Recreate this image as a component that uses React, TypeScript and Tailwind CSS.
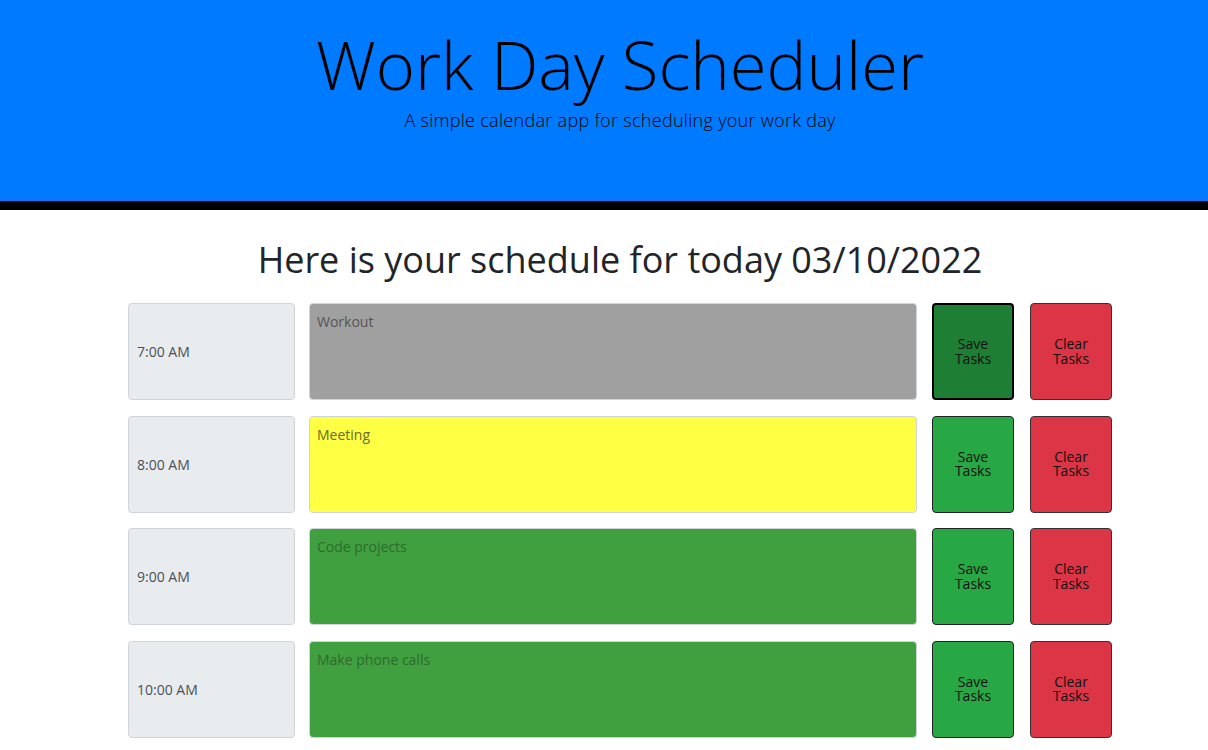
import React from "react";

const rows = [
  { time: "7:00 AM", task: "Workout", bg: "bg-[#a0a0a0]", txt: "text-[#555555]", active: true },
  { time: "8:00 AM", task: "Meeting", bg: "bg-[#ffff44]", txt: "text-[#6b6b30]", active: false },
  { time: "9:00 AM", task: "Code projects", bg: "bg-[#40a040]", txt: "text-[#2f6a2f]", active: false },
  { time: "10:00 AM", task: "Make phone calls", bg: "bg-[#40a040]", txt: "text-[#2f6a2f]", active: false },
];

export default function App() {
  return (
    <div className="min-h-screen bg-white font-['Open_Sans',sans-serif] text-[#212529]">
      <header className="h-[210px] bg-[#007bff] border-b-[9px] border-black pl-[32px] text-center">
        <h1 className="pt-[24px] text-[67px] font-light leading-[80px] text-black">Work Day Scheduler</h1>
        <p className="mt-[4px] text-[18px] font-light leading-[24px] text-black tracking-[0.3px]">
          A simple calendar app for scheduling your work day
        </p>
      </header>
      <main className="pl-[32px]">
        <h2 className="mt-[28px] text-center text-[36px] leading-[44px] font-normal">
          Here is your schedule for today 03/10/2022
        </h2>
        <div className="mx-auto mt-[21px] flex w-[984px] flex-col gap-[15.67px]">
          {rows.map((r) => (
            <div key={r.time} className="flex h-[97px]">
              <div className="flex w-[167px] items-center rounded-[4px] border border-[#ced4da] bg-[#e9ecef] pl-[8px] text-[14px] text-[#495057]">
                {r.time}
              </div>
              <div
                className={`ml-[14px] w-[608px] rounded-[4px] border border-[#ced4da] ${r.bg} ${r.txt} px-[7px] pt-[8px] text-[14px] leading-[20px]`}
              >
                {r.task}
              </div>
              <button
                className={`ml-[15px] flex w-[82px] flex-col items-center justify-center rounded-[4px] text-[14px] leading-[14.5px] text-[#111] ${
                  r.active ? "border-2 border-black bg-[#1e7e34]" : "border border-[#222] bg-[#28a745]"
                }`}
              >
                <span>Save</span>
                <span>Tasks</span>
              </button>
              <button className="ml-[16px] flex w-[82px] flex-col items-center justify-center rounded-[4px] border border-[#333] bg-[#dc3545] text-[14px] leading-[14.5px] text-[#111]">
                <span>Clear</span>
                <span>Tasks</span>
              </button>
            </div>
          ))}
        </div>
      </main>
    </div>
  );
}
